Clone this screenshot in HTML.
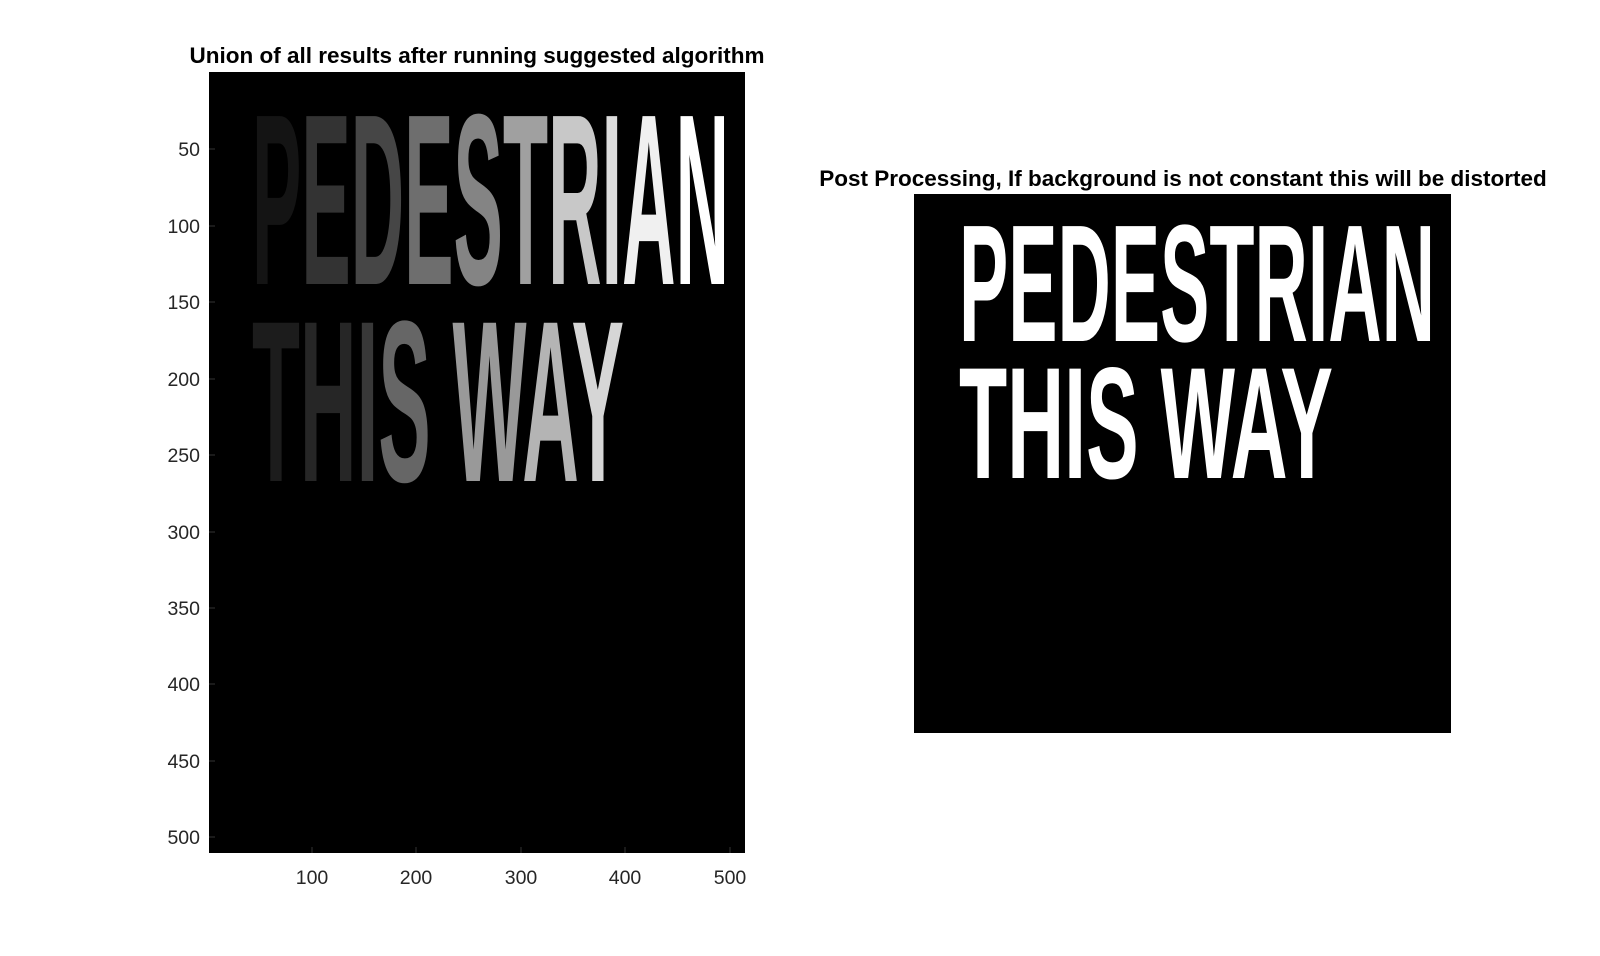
<!DOCTYPE html>
<html><head><meta charset="utf-8"><style>
html,body{margin:0;padding:0;background:#fff;width:1600px;height:956px;overflow:hidden}
svg{display:block}
</style></head><body>
<svg width="1600" height="956" xmlns="http://www.w3.org/2000/svg">
<rect width="1600" height="956" fill="#fff"/>
<text x="477" y="63" font-family="Liberation Sans, sans-serif" font-weight="bold" font-size="22.5" text-anchor="middle" fill="#000">Union of all results after running suggested algorithm</text>
<rect x="209" y="72" width="536" height="781" fill="#000"/>
<g font-family="Liberation Sans, sans-serif" font-size="19.5" fill="#262626" text-anchor="end">
<text x="200" y="156">50</text>
<text x="200" y="233">100</text>
<text x="200" y="309">150</text>
<text x="200" y="386">200</text>
<text x="200" y="462">250</text>
<text x="200" y="539">300</text>
<text x="200" y="615">350</text>
<text x="200" y="691">400</text>
<text x="200" y="768">450</text>
<text x="200" y="844">500</text>
</g>
<g font-family="Liberation Sans, sans-serif" font-size="19.5" fill="#262626" text-anchor="middle">
<text x="312" y="884">100</text>
<text x="416" y="884">200</text>
<text x="521" y="884">300</text>
<text x="625" y="884">400</text>
<text x="730" y="884">500</text>
</g>
<g stroke="#333" stroke-width="1">
<path d="M209 149h6M209 226h6M209 302h6M209 379h6M209 455h6M209 532h6M209 608h6M209 684h6M209 761h6M209 837h6"/>
<path d="M312 853v-6M416 853v-6M521 853v-6M625 853v-6M730 853v-6"/>
</g>
<text x="252" y="284" font-family="Liberation Sans, sans-serif" font-weight="bold" font-size="244" textLength="477" lengthAdjust="spacingAndGlyphs"><tspan fill="#141414">P</tspan><tspan fill="#333">E</tspan><tspan fill="#464646">D</tspan><tspan fill="#6e6e6e">E</tspan><tspan fill="#848484">S</tspan><tspan fill="#a0a0a0">T</tspan><tspan fill="#c8c8c8">R</tspan><tspan fill="#dcdcdc">I</tspan><tspan fill="#f0f0f0">A</tspan><tspan fill="#fff">N</tspan></text>
<text x="252" y="481" font-family="Liberation Sans, sans-serif" font-weight="bold" font-size="230" textLength="372" lengthAdjust="spacingAndGlyphs"><tspan fill="#1c1c1c">T</tspan><tspan fill="#262626">H</tspan><tspan fill="#383838">I</tspan><tspan fill="#666">S</tspan>  <tspan fill="#999">W</tspan><tspan fill="#b4b4b4">A</tspan><tspan fill="#d6d6d6">Y</tspan></text>
<text x="1183" y="186" font-family="Liberation Sans, sans-serif" font-weight="bold" font-size="22.5" text-anchor="middle" fill="#000">Post Processing, If background is not constant this will be distorted</text>
<rect x="914" y="194" width="537" height="539" fill="#000"/>
<text x="959" y="341" font-family="Liberation Sans, sans-serif" font-weight="bold" font-size="167" textLength="476" lengthAdjust="spacingAndGlyphs" fill="#fff">PEDESTRIAN</text>
<text x="959" y="478" font-family="Liberation Sans, sans-serif" font-weight="bold" font-size="159" textLength="374" lengthAdjust="spacingAndGlyphs" fill="#fff">THIS WAY</text>
</svg>
</body></html>
